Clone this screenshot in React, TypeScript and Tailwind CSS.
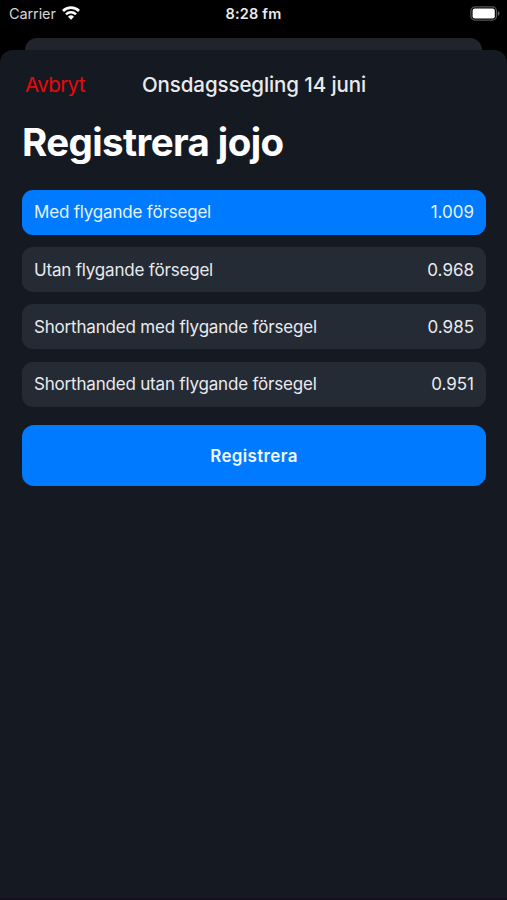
import clsx from "clsx";

const options = [
  { label: "Med flygande försegel", value: "1.009" },
  { label: "Utan flygande försegel", value: "0.968" },
  { label: "Shorthanded med flygande försegel", value: "0.985" },
  { label: "Shorthanded utan flygande försegel", value: "0.951" },
];

export default function App() {
  return (
    <div className="flex h-[900px] w-[507px] flex-col overflow-hidden bg-black font-['Inter','Liberation_Sans',sans-serif] text-[#e9eaee]">
      <StatusBar />
      <div className="mx-[25px] mt-[10px] h-3 shrink-0 rounded-t-[12px] bg-[#22242c]" />
      <main className="flex-1 rounded-t-[13px] bg-[#151a22] pr-[21px] pl-[22px]">
        <SheetHeader />
        <h1 className="h-[48px] text-[38.5px] leading-[46px] font-bold tracking-[-0.6px] whitespace-nowrap text-white">
          Registrera jojo
        </h1>
        <div className="mt-[22.5px] flex flex-col gap-[12.4px]">
          {options.map((option, index) => (
            <OptionRow key={option.label} {...option} selected={index === 0} />
          ))}
        </div>
        <button className="mt-[18.5px] block h-[61px] w-full rounded-[12px] bg-[#007aff] pt-[2px] text-[17px] font-semibold tracking-[0.35px] text-[#f0f7ff]">
          Registrera
        </button>
      </main>
      <div className="h-[2px] shrink-0 bg-[#130f1d]" />
    </div>
  );
}

function StatusBar() {
  return (
    <header className="grid h-7 shrink-0 grid-cols-3 items-center pr-[7px] pl-[9px]">
      <div className="flex items-center gap-[6px]">
        <span className="text-[14.5px] tracking-[-0.1px] text-[#d5d5d5]">Carrier</span>
        <WifiIcon />
      </div>
      <span className="-ml-[2px] text-center text-[14.5px] font-semibold tracking-[0.2px] whitespace-nowrap">
        8:28 fm
      </span>
      <div className="flex justify-end">
        <BatteryIcon />
      </div>
    </header>
  );
}

function SheetHeader() {
  return (
    <div className="grid h-[69px] grid-cols-[100px_1fr_100px] items-center pt-[2px]">
      <button className="pl-[3px] text-left text-[20.5px] tracking-[-0.6px] text-[#e8090c]">
        Avbryt
      </button>
      <h2 className="text-center text-[20.5px] font-medium tracking-[-0.1px] whitespace-nowrap">
        Onsdagssegling 14 juni
      </h2>
    </div>
  );
}

type OptionRowProps = {
  label: string;
  value: string;
  selected: boolean;
};

function OptionRow({ label, value, selected }: OptionRowProps) {
  return (
    <div
      className={clsx(
        "flex h-[45px] items-center justify-between rounded-[11px] px-3 pt-[2px] text-[17px]",
        selected ? "bg-[#007aff] text-[#e3f2ff]" : "bg-[#252b35]",
      )}
    >
      <span className="tracking-[-0.19px]">{label}</span>
      <span>{value}</span>
    </div>
  );
}

function WifiIcon() {
  return (
    <svg className="mb-[2px]" width="18" height="14" viewBox="0 0 18 14" fill="none">
      <path d="M1 5a11.4 11.4 0 0 1 16 0" stroke="#fff" strokeWidth="2.7" />
      <path d="M4 8.3a7.2 7.2 0 0 1 10 0" stroke="#fff" strokeWidth="2.5" />
      <path d="M9 13.8 6 10.8a4.3 4.3 0 0 1 6 0Z" fill="#fff" />
    </svg>
  );
}

function BatteryIcon() {
  return (
    <svg className="mb-[2px]" width="30" height="15" viewBox="0 0 30 15" fill="none">
      <rect x="0.9" y="0.9" width="25.6" height="13.2" rx="4" stroke="#555" strokeWidth="1.2" />
      <rect x="2.6" y="2.6" width="22.2" height="9.8" rx="2.2" fill="#fff" />
      <path d="M27.8 5.2c1 .3 1.7 1.2 1.7 2.3s-.7 2-1.7 2.3Z" fill="#666" />
    </svg>
  );
}
